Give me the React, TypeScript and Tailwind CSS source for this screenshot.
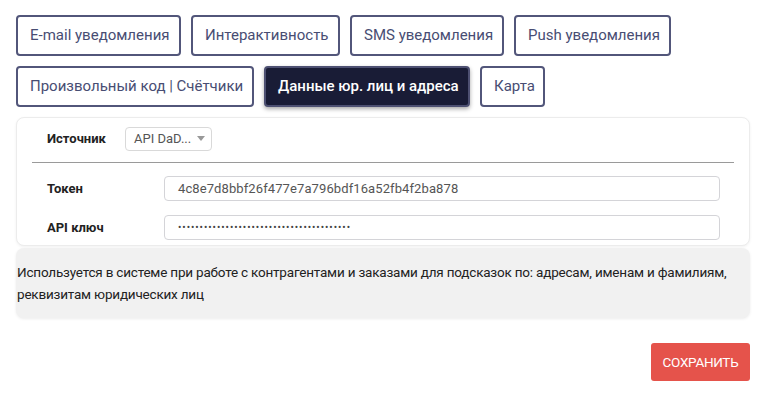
import React from "react";

const tabBase =
  "h-[41px] px-[12px] rounded-[4px] border-2 text-[15px] leading-none flex items-center whitespace-nowrap";
const inactive = "border-[#52567a] text-[#484d73] bg-white";
const active =
  "border-[#4d5072] bg-[#191c36] text-white font-medium shadow-[0_2px_4px_rgba(0,0,0,0.35)]";

function Tab({ label, on, w }: { label: string; on?: boolean; w: string }) {
  return <div className={`${tabBase} ${on ? active : inactive} ${w}`}>{label}</div>;
}

export default function App() {
  return (
    <div
      className="w-[769px] h-[395px] bg-white overflow-hidden"
      style={{ fontFamily: "Roboto, 'Noto Sans', sans-serif" }}
    >
      <div className="ml-4 w-[734px] pt-[15px]">
        <div className="flex gap-[10px]">
          <Tab label="E-mail уведомления" w="w-[165px]" />
          <Tab label="Интерактивность" w="w-[149px]" />
          <Tab label="SMS уведомления" w="w-[154px]" />
          <Tab label="Push уведомления" w="w-[157px]" />
        </div>
        <div className="flex gap-[10px] mt-[10px]">
          <Tab label="Произвольный код | Счётчики" w="w-[238px]" />
          <Tab label="Данные юр. лиц и адреса" on w="w-[206px]" />
          <Tab label="Карта" w="w-[65px]" />
        </div>

        <div className="mt-[10px] h-[129px] rounded-[8px] border border-[#ececec] shadow-[0_1px_3px_rgba(0,0,0,0.06)] bg-white px-[15px] pt-[8px]">
          <div className="flex items-center h-[25px] pl-[15px]">
            <div className="w-[78px] text-[13px] font-bold text-[#222]">Источник</div>
            <div className="w-[87px] h-[24px] border border-[#d9d9d9] rounded-[4px] flex items-center pl-[8px] pr-[6px] text-[13px] text-[#555]">
              <span className="flex-1">API DaD...</span>
              <svg width="8" height="5" viewBox="0 0 8 5">
                <path d="M0 0 L8 0 L4 5 Z" fill="#999" />
              </svg>
            </div>
          </div>
          <div className="mt-[11px] h-px bg-[#9a9a9a]" />
          <div className="flex items-center mt-[13px] h-[25px] pl-[15px]">
            <div className="w-[117px] text-[13px] font-bold text-[#222]">Токен</div>
            <div className="w-[556px] h-[25px] border border-[#d4d4d8] rounded-[4px] flex items-center pl-[13px] text-[13px] text-[#555] tracking-[0.1px]">
              4c8e7d8bbf26f477e7a796bdf16a52fb4f2ba878
            </div>
          </div>
          <div className="flex items-center mt-[14px] h-[25px] pl-[15px]">
            <div className="w-[117px] text-[13px] font-bold text-[#222]">API ключ</div>
            <div className="w-[556px] h-[25px] border border-[#d4d4d8] rounded-[4px] flex items-center pl-[13px] text-[10px] text-[#444] tracking-[0.95px]">
              ••••••••••••••••••••••••••••••••••••••••
            </div>
          </div>
        </div>

        <div className="mt-[2px] h-[70px] rounded-[8px] bg-[#f1f1f1] shadow-[0_1px_3px_rgba(0,0,0,0.08)] pl-[1px] pt-[13px] text-[13.5px] leading-[22px] text-[#222] tracking-[-0.2px]">
          Используется в системе при работе с контрагентами и заказами для подсказок по: адресам, именам и фамилиям,
          <br />
          реквизитам юридических лиц
        </div>

        <div className="flex justify-end mt-[25px]">
          <button className="w-[99px] h-[38px] rounded-[3px] bg-[#e5534b] text-white text-[13.5px] tracking-[-0.3px]">
            СОХРАНИТЬ
          </button>
        </div>
      </div>
    </div>
  );
}
